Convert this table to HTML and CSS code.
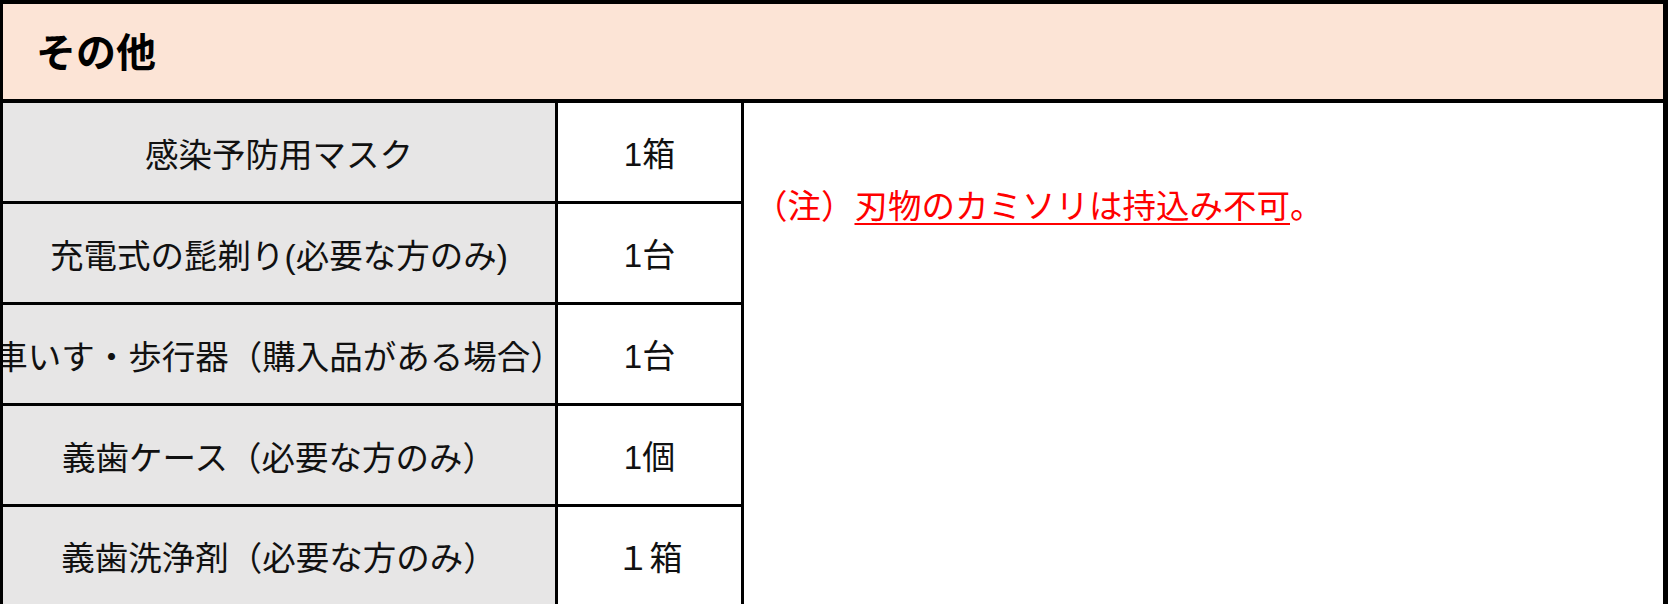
FILE: index.html
```html
<!DOCTYPE html>
<html lang="ja">
<head>
<meta charset="utf-8">
<title>その他</title>
<link rel="stylesheet" href="styles.css">
</head>
<body>
<div class="sheet">
  <div class="title">その他</div>
  <div class="grid">
    <div class="item"><span>感染予防用マスク</span></div>
    <div class="qty">1箱</div>
    <div class="note">（注）<u>刃物のカミソリは持込み不可</u>。</div>
    <div class="item"><span>充電式の髭剃り(必要な方のみ)</span></div>
    <div class="qty">1台</div>
    <div class="item"><span>車いす・歩行器（購入品がある場合）</span></div>
    <div class="qty">1台</div>
    <div class="item"><span>義歯ケース（必要な方のみ）</span></div>
    <div class="qty">1個</div>
    <div class="item"><span>義歯洗浄剤（必要な方のみ）</span></div>
    <div class="qty">１箱</div>
  </div>
</div>
</body>
</html>
```

FILE: styles.css
```css
html, body {
  margin: 0;
  padding: 0;
  background: #ffffff;
  overflow: hidden;
}
body {
  font-family: "Liberation Sans", "Noto Sans CJK JP", sans-serif;
  color: #111111;
}
.sheet {
  width: 1668px;
  height: 604px;
  box-sizing: border-box;
  border-top: 4px solid #000;
  border-left: 3px solid #000;
  border-right: 5px solid #000;
  display: flex;
  flex-direction: column;
}
.title {
  height: 99px;
  flex: none;
  box-sizing: border-box;
  background: #fce4d6;
  border-bottom: 4px solid #000;
  display: flex;
  align-items: center;
  padding-left: 33px;
  padding-bottom: 4px;
  font-family: "Noto Sans CJK JP", sans-serif;
  font-weight: 700;
  font-size: 40px;
  color: #000;
}
.grid {
  flex: 1;
  display: grid;
  grid-template-columns: 552px 183px 1fr;
  grid-template-rows: 98px 98px 98px 98px 1fr;
  gap: 3px;
  background: #000;
}
.item {
  background: #e7e6e6;
  display: flex;
  align-items: center;
  justify-content: center;
  overflow: hidden;
  white-space: nowrap;
  font-size: 33.5px;
}
.item span {
  flex: none;
}
.qty {
  background: #ffffff;
  display: flex;
  align-items: center;
  justify-content: center;
  font-size: 33px;
}
.note {
  grid-column: 3;
  grid-row: 1 / 6;
  background: #ffffff;
  color: #ff0000;
  font-size: 33.5px;
  padding: 76px 0 0 10px;
  white-space: nowrap;
}
.note u {
  text-decoration-thickness: 2px;
  text-underline-offset: 5px;
}
```
